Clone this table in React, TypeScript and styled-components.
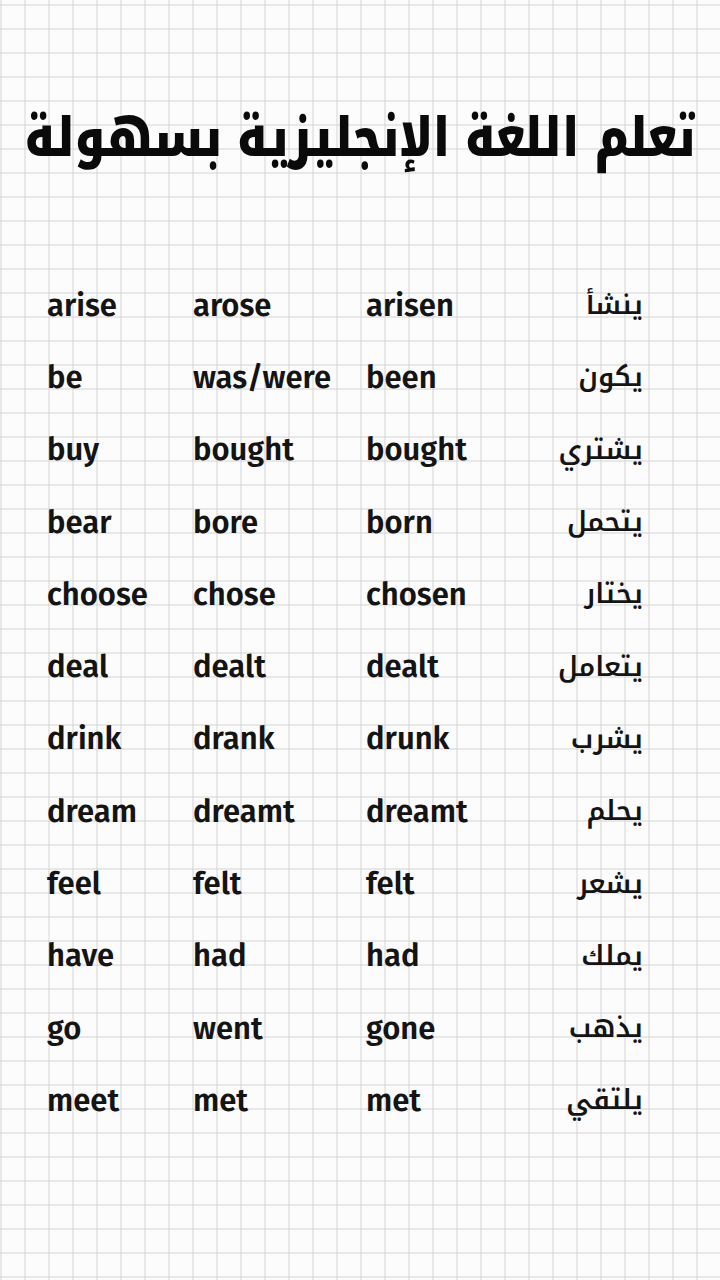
import React from "react";
import styled, { createGlobalStyle } from "styled-components";

const Global = createGlobalStyle`
  html, body {
    margin: 0;
    padding: 0;
  }
  body {
    background-color: #fcfcfc;
    background-image:
      linear-gradient(to right, #d4d4d4 0, #d4d4d4 1.2px, transparent 1.2px),
      linear-gradient(to bottom, #d4d4d4 0, #d4d4d4 1.2px, transparent 1.2px);
    background-size: 24px 24px;
    background-position: 0.5px 4.5px;
  }
`;

const Page = styled.main`
  width: 720px;
  min-height: 1280px;
  display: flex;
  flex-direction: column;
  align-items: stretch;
`;

const Title = styled.h1`
  margin: 0;
  padding-top: 88px;
  height: 84px;
  text-align: center;
  direction: rtl;
  white-space: nowrap;
  font-family: "Noto Kufi Arabic", "Noto Sans Arabic", "DejaVu Sans", sans-serif;
  font-weight: 900;
  font-size: 44.8px;
  line-height: 84px;
  color: #0a0a0a;
  transform: scaleY(1.2);
`;

const Table = styled.div`
  margin-top: 97px;
  padding: 0 77px 0 47px;
  display: grid;
  grid-template-columns: 146px 173px 1fr auto;
  grid-auto-rows: 72.3px;
  align-items: center;
`;

const Word = styled.span`
  font-family: "Fira Sans", "Open Sans", sans-serif;
  font-weight: 600;
  font-size: 31px;
  color: #141414;
  white-space: nowrap;
`;

const Arabic = styled.span`
  direction: rtl;
  text-align: right;
  font-family: "Noto Kufi Arabic", "Noto Sans Arabic", "DejaVu Sans", sans-serif;
  font-weight: 600;
  font-size: 27px;
  color: #141414;
  white-space: nowrap;
`;

const rows: [string, string, string, string][] = [
  ["arise", "arose", "arisen", "ينشأ"],
  ["be", "was/were", "been", "يكون"],
  ["buy", "bought", "bought", "يشتري"],
  ["bear", "bore", "born", "يتحمل"],
  ["choose", "chose", "chosen", "يختار"],
  ["deal", "dealt", "dealt", "يتعامل"],
  ["drink", "drank", "drunk", "يشرب"],
  ["dream", "dreamt", "dreamt", "يحلم"],
  ["feel", "felt", "felt", "يشعر"],
  ["have", "had", "had", "يملك"],
  ["go", "went", "gone", "يذهب"],
  ["meet", "met", "met", "يلتقي"],
];

export default function App() {
  return (
    <Page>
      <Global />
      <Title>تعلم اللغة الإنجليزية بسهولة</Title>
      <Table>
        {rows.map((r) => (
          <React.Fragment key={r[0]}>
            <Word>{r[0]}</Word>
            <Word>{r[1]}</Word>
            <Word>{r[2]}</Word>
            <Arabic>{r[3]}</Arabic>
          </React.Fragment>
        ))}
      </Table>
    </Page>
  );
}
